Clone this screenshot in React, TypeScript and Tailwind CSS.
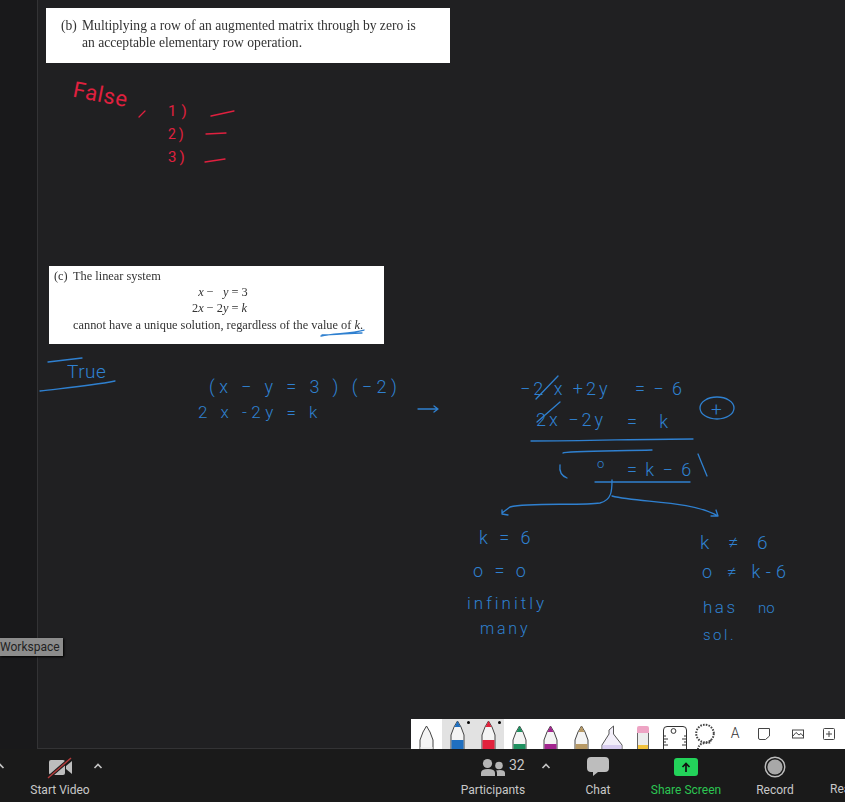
import React from 'react'

function Pen({ color, top, band, tip = true }: { color: string; top: number; band: number; tip?: boolean }) {
  const body = `M15.5 ${top} L19 ${top + 6} L22 ${top + 14} V31 H9 V${top + 14} L12 ${top + 6} Z`
  return (
    <svg width="31" height="30" viewBox="0 0 31 30">
      <path d={body} fill="#f4f4f4" stroke="#444" strokeWidth="1" />
      {tip && <path d={`M15.5 ${top} L18.5 ${top + 6} H12.5 Z`} fill={color} />}
      <rect x="9.5" y={band} width="12" height={31 - band} fill={color} />
    </svg>
  )
}

function Highlighter() {
  return (
    <svg width="31" height="30" viewBox="0 0 31 30">
      <path d="M16.5 7 L12 11 V15 L5 26 V31 H25 V26 L16.5 15 Z" fill="#f3effa" stroke="#555" strokeWidth="1" />
      <rect x="5.5" y="26" width="19" height="5" fill="#d8cdf0" />
    </svg>
  )
}

function Eraser() {
  return (
    <svg width="31" height="30" viewBox="0 0 31 30">
      <path d="M9 14 V9 Q9 7 11 7 H19 Q21 7 21 9 V14 Z" fill="#eea4c4" />
      <rect x="9" y="14" width="12" height="12" fill="#ececec" />
      <rect x="9" y="26" width="12" height="5" fill="#f2c23c" />
      <path d="M9.5 14 V30 M20.5 14 V30" stroke="#666" strokeWidth="1" />
    </svg>
  )
}

function Ruler() {
  return (
    <svg width="31" height="30" viewBox="0 0 31 30" fill="none" stroke="#333" strokeWidth="1">
      <path d="M4.5 31 V11 Q4.5 7.5 8 7.5 H24 Q27.5 7.5 27.5 11 V31" />
      <circle cx="14.5" cy="12" r="2.4" />
      <path d="M4.5 17 H7 M4.5 20 H9 M4.5 23 H7 M4.5 26 H9 M27.5 17 H25 M27.5 20 H23 M27.5 23 H25 M27.5 26 H23" />
    </svg>
  )
}

function Lasso() {
  return (
    <svg width="31" height="30" viewBox="0 0 31 30" fill="none" stroke="#444" strokeWidth="2" strokeDasharray="1.6 1.2">
      <circle cx="15" cy="14.5" r="8.8" />
      <path d="M20 21 C23 25 15 23 11 25 C9 27 8 28 8 30" />
    </svg>
  )
}

function NoteIcon() {
  return (
    <svg width="31" height="30" viewBox="0 0 31 30" fill="none" stroke="#444" strokeWidth="1">
      <path d="M9.5 9.5 H20.5 V17 L16.5 20.5 H11 Q9.5 20.5 9.5 19 Z" />
    </svg>
  )
}

function ImageIcon() {
  return (
    <svg width="31" height="30" viewBox="0 0 31 30" fill="none" stroke="#444" strokeWidth="1">
      <rect x="9.5" y="11" width="11" height="8" />
      <path d="M10 17 L13 13.5 L16 16 L18 14.5 L20.5 17.5" />
    </svg>
  )
}

function PlusBox() {
  return (
    <svg width="31" height="30" viewBox="0 0 31 30" fill="none" stroke="#444" strokeWidth="1">
      <rect x="9.5" y="9.5" width="11" height="11" rx="1" />
      <path d="M15 12 V18 M12 15 H18" />
    </svg>
  )
}

function Caret() {
  return (
    <svg width="12" height="8" viewBox="0 0 12 8" fill="none" stroke="#c4c4c4" strokeWidth="1.6">
      <path d="M2.5 6 L6 2.5 L9.5 6" />
    </svg>
  )
}

function BoardToolbar() {
  return (
    <div className="absolute bottom-0 right-0 flex h-[30px] w-[434px] overflow-hidden bg-white">
      <div className="w-[31px]"><Pen color="#ededed" top={7} band={28} tip={false} /></div>
      <div className="relative w-[31px] bg-[#e2e2e2]">
        <Pen color="#1f6fc0" top={2} band={21} />
        <span className="absolute left-[25px] top-[2px] h-[3px] w-[3px] rounded-full bg-black" />
      </div>
      <div className="relative w-[31px] bg-[#e2e2e2]">
        <Pen color="#e3223c" top={2} band={21} />
        <span className="absolute left-[25px] top-[2px] h-[3px] w-[3px] rounded-full bg-black" />
      </div>
      <div className="w-[31px]"><Pen color="#1f9160" top={7} band={25} /></div>
      <div className="w-[31px]"><Pen color="#a3258f" top={7} band={25} /></div>
      <div className="w-[31px]"><Pen color="#b89a66" top={7} band={25} /></div>
      <div className="w-[31px]"><Highlighter /></div>
      <div className="w-[31px]"><Eraser /></div>
      <div className="w-[31px]"><Ruler /></div>
      <div className="w-[31px]"><Lasso /></div>
      <div className="flex w-[28px] items-center justify-center pb-[1px] font-['Roboto',sans-serif] text-[14px] font-light text-[#333]">A</div>
      <div className="w-[34px]"><NoteIcon /></div>
      <div className="w-[31px]"><ImageIcon /></div>
      <div className="w-[31px]"><PlusBox /></div>
    </div>
  )
}

function Annotations() {
  const red = "absolute font-['Roboto',sans-serif] font-normal text-[#e0203f] whitespace-nowrap"
  const blue = "absolute font-['Roboto',sans-serif] font-light text-[#2f80d0] whitespace-nowrap"
  return (
    <>
      <svg className="absolute left-0 top-0" width="845" height="749" viewBox="0 0 845 749" fill="none">
        <g stroke="#e0203f" strokeWidth="1.3" strokeLinecap="round">
          <path d="M139 117 L145 111" />
          <path d="M211 116 L234 111" />
          <path d="M206 134 L226 133" />
          <path d="M205 162 L225 159" />
        </g>
        <g stroke="#2f80d0" strokeWidth="1.3" strokeLinecap="round" strokeLinejoin="round">
          <path d="M321 336 C335 333 350 334 364 330 M322 335 C336 335 350 333 362 333" />
          <path d="M48 362 L82 358" />
          <path d="M40 391 C65 388 90 386 115 381" />
          <path d="M418 409 H437 M434 406 L438 409 L434 412" />
          <path d="M536 399 L558 376" />
          <path d="M537 422 L560 402" />
          <ellipse cx="717" cy="408" rx="17" ry="11" />
          <path d="M531 441 C590 441 640 439 693 439" />
          <path d="M563 453 C565 451 620 451 652 450" />
          <path d="M560 465 C559 472 562 476 567 478" />
          <path d="M698 454 L707 476" />
          <path d="M595 482 H690" />
          <path d="M612 480 C612 490 612 500 600 503 C580 506 530 502 510 507 L502 513 M502 510 L502 514 L508 515" />
          <path d="M612 496 C640 503 690 500 718 516 M711 516 L718 516 L716 510" />
        </g>
      </svg>

      <span className={`${red} left-[73px] top-[78px] rotate-[11deg] text-[22px] font-light tracking-[0.6px]`}>False</span>
      <span className={`${red} left-[168px] top-[100px] text-[15px] tracking-[5px]`}>1)</span>
      <span className={`${red} left-[168px] top-[124px] text-[14px] tracking-[3px]`}>2)</span>
      <span className={`${red} left-[168px] top-[146px] text-[15px] tracking-[3px]`}>3)</span>

      <span className={`${blue} left-[67px] top-[358px] text-[19px] tracking-[0.5px]`}>True</span>
      <span className={`${blue} left-[209px] top-[373px] text-[18px] tracking-[4.4px]`}>(x − y = 3 ) (−2)</span>
      <span className={`${blue} left-[198px] top-[400px] text-[17px] tracking-[4.5px]`}>2 x -2y = k</span>

      <span className={`${blue} left-[520px] top-[375px] text-[18px] tracking-[3px]`}>−2 x +2y</span>
      <span className={`${blue} left-[635px] top-[375px] text-[18px] tracking-[2px]`}>= − 6</span>
      <span className={`${blue} left-[536px] top-[406px] text-[18px] tracking-[3px]`}>2x −2y</span>
      <span className={`${blue} left-[627px] top-[408px] text-[18px] tracking-[9px]`}>= k</span>
      <span className={`${blue} left-[711px] top-[396px] text-[19px]`}>+</span>
      <span className={`${blue} left-[597px] top-[454px] text-[13px]`}>o</span>
      <span className={`${blue} left-[627px] top-[456px] text-[18px] tracking-[2px]`}>= k − 6</span>

      <span className={`${blue} left-[479px] top-[524px] text-[18px] tracking-[3.5px]`}>k = 6</span>
      <span className={`${blue} left-[473px] top-[557px] text-[18px] tracking-[3.5px]`}>o = o</span>
      <span className={`${blue} left-[467px] top-[591px] text-[17px] tracking-[3px]`}>infinitly</span>
      <span className={`${blue} left-[480px] top-[617px] text-[16px] tracking-[2.8px]`}>many</span>

      <span className={`${blue} left-[700px] top-[529px] text-[19px] tracking-[7px]`}>k ≠ 6</span>
      <span className={`${blue} left-[702px] top-[558px] text-[18px] tracking-[5.2px]`}>o ≠ k-6</span>
      <span className={`${blue} left-[703px] top-[595px] text-[17px] tracking-[2.5px]`}>has</span>
      <span className={`${blue} left-[758px] top-[597px] text-[15px]`}>no</span>
      <span className={`${blue} left-[703px] top-[624px] text-[15px] tracking-[2.5px]`}>sol.</span>
    </>
  )
}

function Cards() {
  return (
    <>
      <div className="absolute left-[46px] top-[8px] flex h-[55px] w-[404px] bg-white pl-[15px] pt-[9px] font-['Liberation_Serif',serif] text-[13.6px] leading-[17px] text-[#333] blur-[0.3px]">
        <span className="w-[21px] shrink-0">(b)</span>
        <span className="whitespace-nowrap">
          Multiplying a row of an augmented matrix through by zero is
          <br />
          an acceptable elementary row operation.
        </span>
      </div>
      <div className="absolute left-[49px] top-[266px] h-[78px] w-[335px] bg-white font-['Liberation_Serif',serif] text-[12.35px] leading-[15px] text-[#333] blur-[0.3px]">
        <div className="flex pl-[5px] pt-[3px]">
          <span className="w-[19px]">(c)</span>
          <span>The linear system</span>
        </div>
        <div className="ml-[143px] whitespace-pre leading-[16px]">
          <div><i>  x</i> −   <i>y</i> = 3</div>
          <div>2<i>x</i> − 2<i>y</i> = <i>k</i></div>
        </div>
        <div className="ml-[24px] mt-[2px] whitespace-nowrap">
          cannot have a unique solution, regardless of the value of <i>k</i>.
        </div>
      </div>
    </>
  )
}

export default function App() {
  return (
    <div className="flex h-[802px] w-[845px] flex-col overflow-hidden bg-[#1a1a1a] font-['Roboto',sans-serif]">
      <div className="relative flex h-[749px] shrink-0">
        <div className="w-[37px] shrink-0 bg-[#19191b]" />
        <div className="flex-1 border-b border-l border-[#333335] bg-[#202022]" />
        <Cards />
        <Annotations />
        <div className="absolute left-0 top-[638px] flex h-[18px] w-[63px] items-center bg-[#8c8c8c] text-[12px] text-[#222] shadow-[1px_1px_2px_#000]">
          Workspace
        </div>
        <BoardToolbar />
      </div>

      <div className="flex h-[53px] items-start overflow-hidden bg-[#1a1a1a] text-[12px] text-[#c8c8c8]">
        <div className="-ml-[6px] mt-[13px] w-[12px]"><Caret /></div>
        <div className="ml-[22px] flex w-[64px] shrink-0 flex-col items-center">
          <svg className="mt-[8px]" width="26" height="22" viewBox="0 0 26 22">
            <path d="M2 5 Q2 3 4 3 H16 Q18 3 18 5 V16 Q18 18 16 18 H4 Q2 18 2 16 Z" fill="#bdbdbd" />
            <path d="M19 9 L25 4 V17 L19 12 Z" fill="#bdbdbd" />
            <path d="M1 21 L24 1" stroke="#1a1a1a" strokeWidth="3.5" />
            <path d="M1 21 L24 1" stroke="#b03a3a" strokeWidth="1.5" />
          </svg>
          <span className="mt-[2px] whitespace-nowrap">Start Video</span>
        </div>
        <div className="mt-[13px] w-[12px] shrink-0"><Caret /></div>

        <div className="ml-[354px] flex w-[70px] shrink-0 flex-col items-center">
          <div className="relative h-[31px] w-full">
            <svg className="absolute left-[22px] top-[9px]" width="26" height="19" viewBox="0 0 26 19" fill="#b5b5b5">
              <circle cx="7.5" cy="5.5" r="4.6" />
              <circle cx="19" cy="7.5" r="3.8" />
              <path d="M1 18 V15 Q1 11 8 11 Q15 11 15 15 V18 Z" />
              <path d="M17 18 V15 Q17 13 16 12.5 Q18 12 20 12 Q25 12 25 15 V18 Z" />
            </svg>
            <span className="absolute left-[51px] top-[6px] text-[14px]">32</span>
          </div>
          <span className="mt-[1px]">Participants</span>
        </div>
        <div className="ml-[12px] mt-[13px] w-[12px] shrink-0"><Caret /></div>

        <div className="ml-[21px] flex w-[50px] shrink-0 flex-col items-center">
          <svg className="mt-[8px]" width="22" height="20" viewBox="0 0 22 20" fill="#bdbdbd">
            <path d="M4 0 H18 Q22 0 22 4 V11 Q22 15 18 15 H11 L6 19 V15 H4 Q0 15 0 11 V4 Q0 0 4 0 Z" />
          </svg>
          <span className="mt-[4px]">Chat</span>
        </div>

        <div className="ml-[25px] flex w-[76px] shrink-0 flex-col items-center">
          <div className="mt-[9px] flex h-[18px] w-[24px] items-center justify-center rounded-[3px] bg-[#23d35a]">
            <svg width="10" height="11" viewBox="0 0 10 11" fill="none" stroke="#111" strokeWidth="1.7">
              <path d="M5 10 V2 M1.5 5 L5 1.5 L8.5 5" />
            </svg>
          </div>
          <span className="mt-[5px] whitespace-nowrap text-[#2cc552]">Share Screen</span>
        </div>

        <div className="ml-[21px] flex w-[60px] shrink-0 flex-col items-center">
          <svg className="mt-[7px]" width="22" height="22" viewBox="0 0 22 22">
            <circle cx="11" cy="11" r="9.8" fill="none" stroke="#bdbdbd" strokeWidth="1.4" />
            <circle cx="11" cy="11" r="7.6" fill="#a8a8a8" />
          </svg>
          <span className="mt-[3px]">Record</span>
        </div>

        <span className="ml-[25px] mt-[31px] shrink-0 whitespace-nowrap">Reactions</span>
      </div>
    </div>
  )
}
